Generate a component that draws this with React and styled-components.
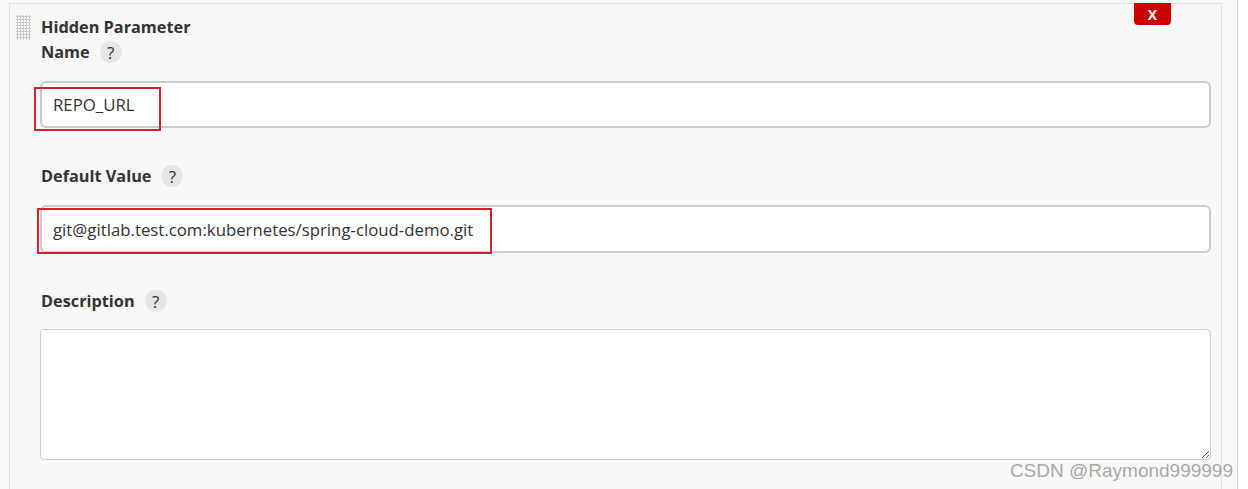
import React from "react";
import styled, { createGlobalStyle } from "styled-components";

const Global = createGlobalStyle`
  html, body { margin: 0; padding: 0; background: #f8f8f8; }
  body { font-family: "Segoe UI", "Open Sans", "Noto Sans", sans-serif; color: #333; }
  * { box-sizing: border-box; }
`;

const Page = styled.div`
  position: relative;
  display: flex;
  width: 1248px;
  height: 489px;
  overflow: hidden;
  background: #f9f9f9;
`;

const Main = styled.div`
  width: 1237px;
  padding: 3px 15px 0 9px;
`;

const Edge = styled.div`
  flex: 1;
  border-left: 1px solid #c9d0d6;
  background: #fff;
`;

const Panel = styled.div`
  position: relative;
  display: grid;
  grid-template-columns: 15px 1fr;
  column-gap: 9px;
  height: 520px;
  padding: 11px 10px 0 6px;
  border: 1px solid #e2e2e2;
  background: #f8f8f8;
`;

const Handle = styled.div`
  width: 15px;
  height: 25px;
  background-image: radial-gradient(circle, #c9c9c9 1px, transparent 1.2px);
  background-size: 3px 3px;
`;

const Content = styled.div`
  display: flex;
  flex-direction: column;
`;

const Title = styled.div`
  font-weight: 700;
  font-size: 16.3px;
  line-height: 22px;
  margin-top: 1px;
  padding-left: 1px;
`;

const LabelRow = styled.div`
  display: flex;
  align-items: center;
  gap: 10px;
  height: 26px;
  margin-top: ${(p) => p.$top}px;
  padding-left: 1px;
  font-weight: 700;
  font-size: 16.3px;
`;

const Help = styled.span`
  display: inline-flex;
  align-items: center;
  justify-content: center;
  width: 22px;
  height: 22px;
  border-radius: 50%;
  background: #e6e6e6;
  color: #333;
  font-weight: 400;
  font-size: 17px;
`;

const Field = styled.div`
  position: relative;
  margin-top: 16px;
`;

const Input = styled.div`
  height: ${(p) => p.$h}px;
  display: flex;
  align-items: center;
  padding: 0 11px;
  background: #fff;
  border: 2px solid #c6ced4;
  border-radius: 6px;
  font-size: 16.8px;
  color: #333;
`;

const TextArea = styled.textarea`
  display: block;
  width: 100%;
  height: 131px;
  margin-top: 15px;
  background: #fff;
  border: 1px solid #c6ced4;
  border-radius: 4px;
  resize: vertical;
  font-family: inherit;
  font-size: 16px;
  outline: none;
`;

const Mark = styled.div`
  position: absolute;
  left: ${(p) => p.$l}px;
  top: ${(p) => p.$t}px;
  width: ${(p) => p.$w}px;
  height: ${(p) => p.$h}px;
  border: 2px solid #d3222f;
  pointer-events: none;
`;

const CloseBtn = styled.div`
  position: absolute;
  top: -1px;
  right: 50px;
  width: 37px;
  height: 22px;
  display: flex;
  align-items: center;
  justify-content: center;
  background: #cc0000;
  color: #fff;
  font-weight: 700;
  font-size: 14px;
  border-radius: 0 0 4px 4px;
`;

const Watermark = styled.div`
  position: absolute;
  right: 15px;
  bottom: 7px;
  font-family: "Liberation Sans", Arial, sans-serif;
  font-size: 19px;
  color: #a8a8a8;
`;

export default function App() {
  return (
    <>
      <Global />
      <Page>
        <Main>
          <Panel>
            <CloseBtn>X</CloseBtn>
            <Handle />
            <Content>
              <Title>Hidden Parameter</Title>
              <LabelRow $top={1}>
                Name <Help>?</Help>
              </LabelRow>
              <Field>
                <Input $h={47}>REPO_URL</Input>
                <Mark $l={-6} $t={6} $w={127} $h={44} />
              </Field>
              <LabelRow $top={35}>
                Default Value <Help>?</Help>
              </LabelRow>
              <Field>
                <Input $h={48}>git@gitlab.test.com:kubernetes/spring-cloud-demo.git</Input>
                <Mark $l={-3} $t={3} $w={455} $h={46} />
              </Field>
              <LabelRow $top={35}>
                Description <Help>?</Help>
              </LabelRow>
              <TextArea />
            </Content>
          </Panel>
        </Main>
        <Edge />
        <Watermark>CSDN @Raymond999999</Watermark>
      </Page>
    </>
  );
}
